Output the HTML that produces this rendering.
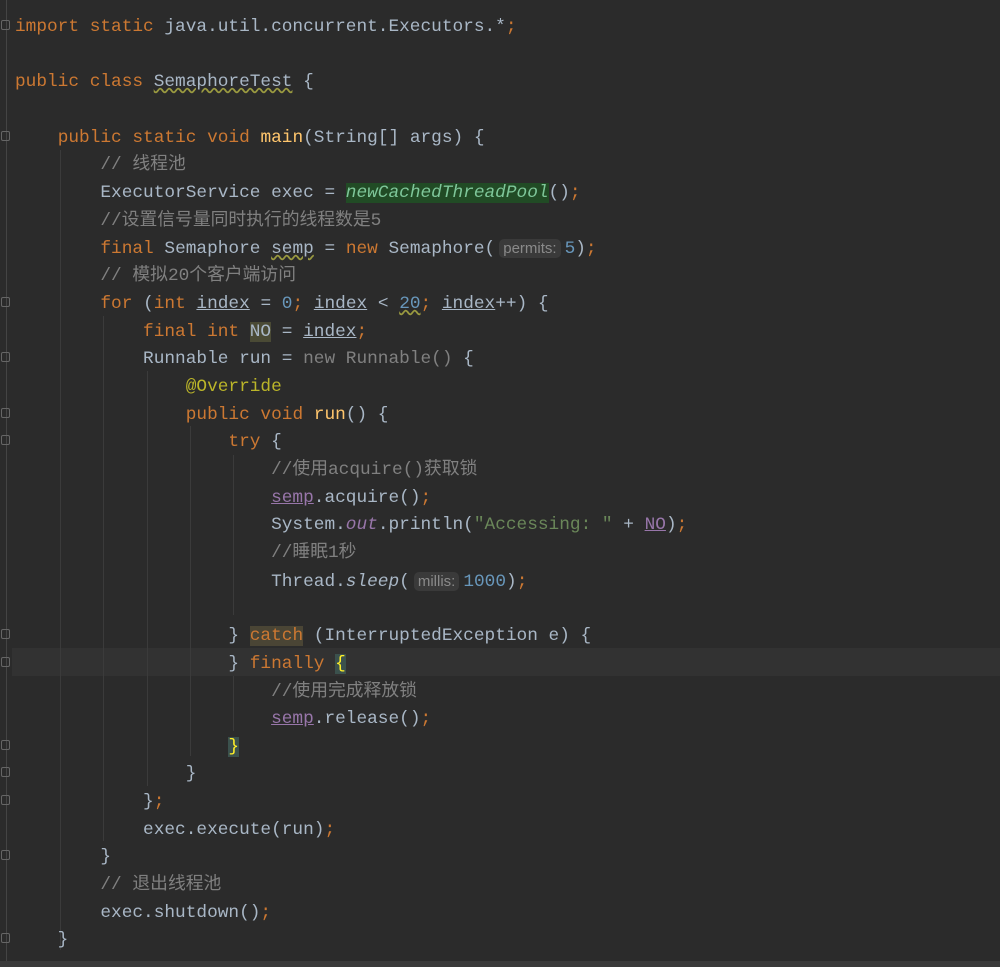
<!DOCTYPE html>
<html><head><meta charset="utf-8"><style>
body{margin:0;width:1000px;height:967px;background:#2b2b2b;overflow:hidden;position:relative;font-family:"Liberation Mono","Noto Sans CJK SC",monospace;font-size:17.8px;color:#a9b7c6}
.l{position:absolute;left:15px;white-space:pre;height:27.7px;line-height:27.7px;margin-top:3px}
.k{color:#cc7832}.c{color:#808080}.n{color:#6897bb}.s{color:#6a8759}.m{color:#ffc66d}.a{color:#bbb529}
.f{color:#9876aa;text-decoration:underline}.i{font-style:italic}.u{text-decoration:underline}
.w{text-decoration:underline wavy #9a9a40}
.h{font-family:"Liberation Sans",sans-serif;font-size:15px;color:#8a8a8a;background:#3a3a3a;border-radius:5px;padding:1px 4px;margin:0 4px}
.g{position:absolute;width:1px;background:#3b3b3b}
.cur{position:absolute;left:12px;right:0;top:648px;height:28px;background:#323232}
.fold{position:absolute;left:1px;width:9px;height:10px;border:1px solid #666;border-radius:2px;box-sizing:border-box}
</style></head><body>
<div class="cur"></div>
<div style="position:absolute;left:6px;top:0;width:1px;height:967px;background:#444"></div>
<div style="position:absolute;left:0;top:961px;width:1000px;height:6px;background:#3a3a3a"></div>
<div class="g" style="left:60px;top:150px;height:800px"></div>
<div class="g" style="left:103px;top:316px;height:525px"></div>
<div class="g" style="left:147px;top:371px;height:415px"></div>
<div class="g" style="left:190px;top:426px;height:330px"></div>
<div class="g" style="left:233px;top:455px;height:160px"></div>
<div class="g" style="left:233px;top:676px;height:55px"></div>
<div class="fold" style="top:20px"></div><div class="fold" style="top:131px"></div>
<div class="fold" style="top:297px"></div><div class="fold" style="top:352px"></div>
<div class="fold" style="top:408px"></div><div class="fold" style="top:435px"></div>
<div class="fold" style="top:629px"></div><div class="fold" style="top:657px"></div>
<div class="fold" style="top:740px"></div><div class="fold" style="top:767px"></div>
<div class="fold" style="top:795px"></div><div class="fold" style="top:850px"></div>
<div class="fold" style="top:933px"></div>
<div class="l" style="top:11px"><span class="k">import static </span>java.util.concurrent.Executors.*<span class="k">;</span></div>
<div class="l" style="top:66px"><span class="k">public class </span><span class="w">SemaphoreTest</span> {</div>
<div class="l" style="top:122px">    <span class="k">public static void </span><span class="m">main</span>(String[] args) {</div>
<div class="l" style="top:149px">        <span class="c">// 线程池</span></div>
<div class="l" style="top:177px">        ExecutorService exec = <span class="i" style="background:#214b25;color:#7ec699">newCachedThreadPool</span>()<span class="k">;</span></div>
<div class="l" style="top:205px">        <span class="c">//设置信号量同时执行的线程数是5</span></div>
<div class="l" style="top:232px">        <span class="k">final </span>Semaphore <span class="w">semp</span> = <span class="k">new </span>Semaphore(<span class="h">permits:</span><span class="n">5</span>)<span class="k">;</span></div>
<div class="l" style="top:260px">        <span class="c">// 模拟20个客户端访问</span></div>
<div class="l" style="top:288px">        <span class="k">for </span>(<span class="k">int </span><span class="u">index</span> = <span class="n">0</span><span class="k">; </span><span class="u">index</span> &lt; <span class="n w">20</span><span class="k">; </span><span class="u">index</span>++) {</div>
<div class="l" style="top:316px">            <span class="k">final int </span><span style="background:#4a4a35">NO</span> = <span class="u">index</span><span class="k">;</span></div>
<div class="l" style="top:343px">            Runnable run = <span style="color:#808080">new Runnable() </span>{</div>
<div class="l" style="top:371px">                <span class="a">@Override</span></div>
<div class="l" style="top:399px">                <span class="k">public void </span><span class="m">run</span>() {</div>
<div class="l" style="top:426px">                    <span class="k">try </span>{</div>
<div class="l" style="top:454px">                        <span class="c">//使用acquire()获取锁</span></div>
<div class="l" style="top:482px">                        <span class="f">semp</span>.acquire()<span class="k">;</span></div>
<div class="l" style="top:509px">                        System.<span class="i" style="color:#9876aa">out</span>.println(<span class="s">"Accessing: "</span> + <span class="f">NO</span>)<span class="k">;</span></div>
<div class="l" style="top:537px">                        <span class="c">//睡眠1秒</span></div>
<div class="l" style="top:565px">                        Thread.<span class="i">sleep</span>(<span class="h">millis:</span><span class="n">1000</span>)<span class="k">;</span></div>
<div class="l" style="top:620px">                    } <span class="k" style="background:#4a4535">catch</span> (InterruptedException e) {</div>
<div class="l" style="top:648px">                    } <span class="k">finally </span><span style="background:#3b514d;color:#ffef28">{</span></div>
<div class="l" style="top:676px">                        <span class="c">//使用完成释放锁</span></div>
<div class="l" style="top:703px">                        <span class="f">semp</span>.release()<span class="k">;</span></div>
<div class="l" style="top:731px">                    <span style="background:#3b514d;color:#ffef28">}</span></div>
<div class="l" style="top:758px">                }</div>
<div class="l" style="top:786px">            }<span class="k">;</span></div>
<div class="l" style="top:814px">            exec.execute(run)<span class="k">;</span></div>
<div class="l" style="top:841px">        }</div>
<div class="l" style="top:869px">        <span class="c">// 退出线程池</span></div>
<div class="l" style="top:897px">        exec.shutdown()<span class="k">;</span></div>
<div class="l" style="top:924px">    }</div>
</body></html>
